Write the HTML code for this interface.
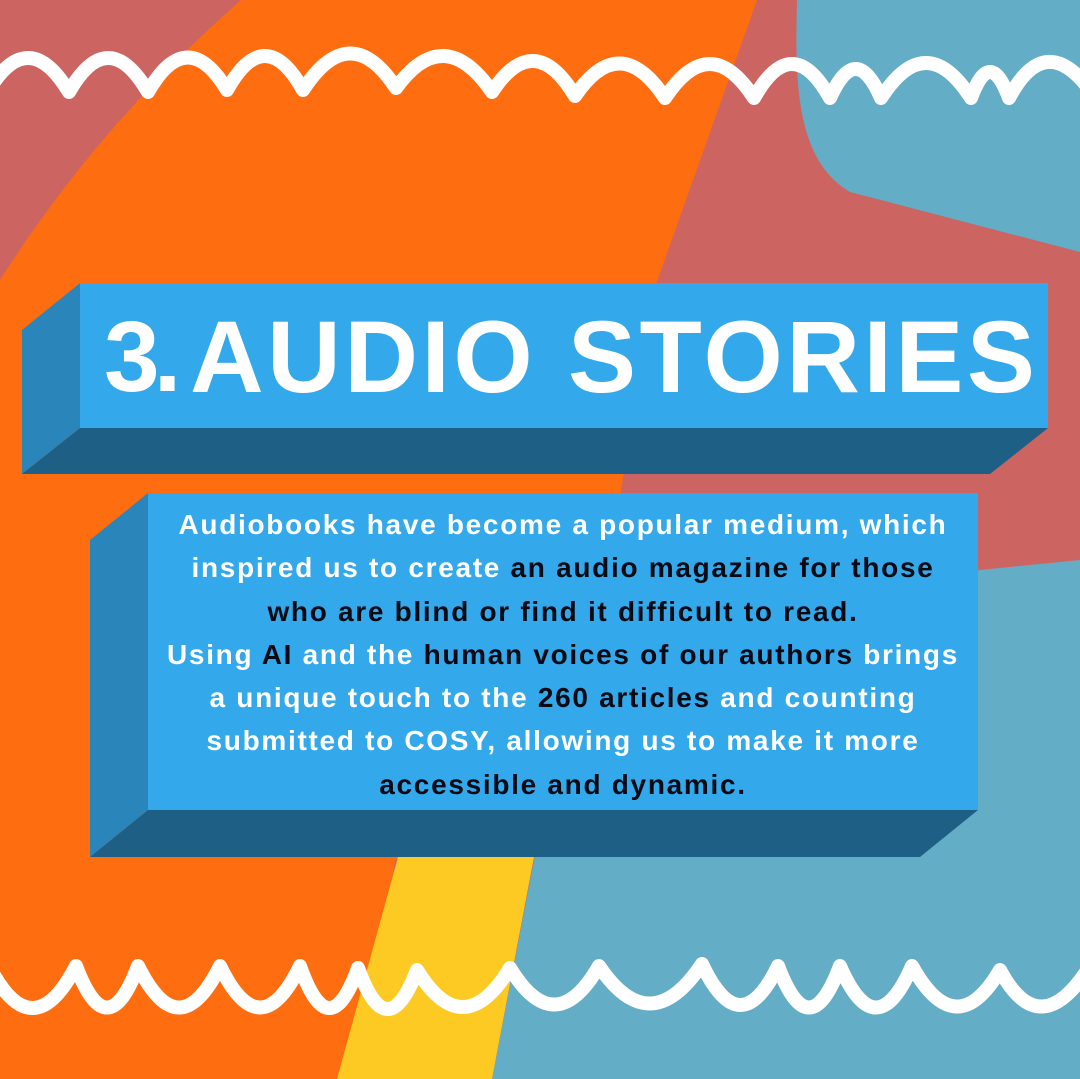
<!DOCTYPE html>
<html><head><meta charset="utf-8"><style>
html,body{margin:0;padding:0;}
body{width:1080px;height:1079px;overflow:hidden;position:relative;background:#CC6461;font-family:"Liberation Sans",sans-serif;}
svg{position:absolute;left:0;top:0;}
.title{position:absolute;left:80px;top:283px;width:968px;height:145px;color:#fff;font-weight:bold;font-size:102px;line-height:145px;white-space:nowrap;}
.title .n{position:absolute;left:24px;top:2px;font-size:100px;letter-spacing:-6px;}
.title .t{position:absolute;left:110px;top:2px;letter-spacing:3.5px;}
.body{position:absolute;left:148px;top:503px;width:830px;text-align:center;color:#fff;font-weight:bold;font-size:28px;letter-spacing:1.7px;line-height:43.3px;white-space:nowrap;}
.k{color:#0a0a14;}
</style></head><body>
<svg width="1080" height="1079" viewBox="0 0 1080 1079">
  <path d="M797,0 C795,80 795,160 850,192 L1080,252 L1080,0 Z" fill="#64ADC6"/>
  <path d="M241,0 L757,0 L654,290 L560,860 L395,860 L380,960 L337,1079 L0,1079 L0,280 C70,170 150,80 241,0 Z" fill="#FE6D10"/>
  <path d="M1080,560 L980,570 L600,700 L534,860 L492,1079 L1080,1079 Z" fill="#64ADC6"/>
  <path d="M398,857 L534,857 L492,1079 L337,1079 Z" fill="#FDC923"/>
  <path d="M-10,88 Q29,26 69,92 Q108,24 148,92 Q187,24 227,90 Q265,22 303,90 Q350,18 396,88 Q444,22 492,92 Q534,28 575,96 Q620,30 665,98 Q710,30 754,98 Q792,30 830,98 Q856,40 881,98 Q926,28 971,98 Q990,46 1009,98 Q1045,30 1090,90" fill="none" stroke="#fff" stroke-width="14" stroke-linejoin="round" stroke-linecap="round"/>
  <path d="M-10,968 Q33,1049 76,966 Q107,1049 138,966 Q179,1049 220,966 Q260,1049 300,966 Q329,1049 358,968 Q387,1049 417,970 Q463,1045 510,968 Q555,1042 599,966 Q650,1042 702,964 Q740,1045 778,966 Q809,1049 840,966 Q876,1049 912,966 Q956,1045 1000,970 Q1040,1045 1090,966" fill="none" stroke="#fff" stroke-width="14" stroke-linejoin="round" stroke-linecap="round"/>
  <polygon points="80,283 22,330 22,474 80,428" fill="#2A85BA"/>
  <polygon points="80,428 1048,428 990,474 22,474" fill="#1E5F85"/>
  <rect x="80" y="283" width="968" height="145" fill="#33A8EA"/>
  <polygon points="148,493 90,540 90,857 148,810" fill="#2A85BA"/>
  <polygon points="148,810 978,810 920,857 90,857" fill="#1E5F85"/>
  <rect x="148" y="493" width="830" height="317" fill="#33A8EA"/>
</svg>
<div class="title"><span class="n">3.</span><span class="t">AUDIO STORIES</span></div>
<div class="body">
Audiobooks have become a popular medium, which<br>
inspired us to create <span class="k">an audio magazine for those</span><br>
<span class="k">who are blind or find it difficult to read.</span><br>
Using <span class="k">AI</span> and the <span class="k">human voices of our authors</span> brings<br>
a unique touch to the <span class="k">260 articles</span> and counting<br>
submitted to COSY, allowing us to make it more<br>
<span class="k">accessible and dynamic.</span>
</div>
</body></html>
